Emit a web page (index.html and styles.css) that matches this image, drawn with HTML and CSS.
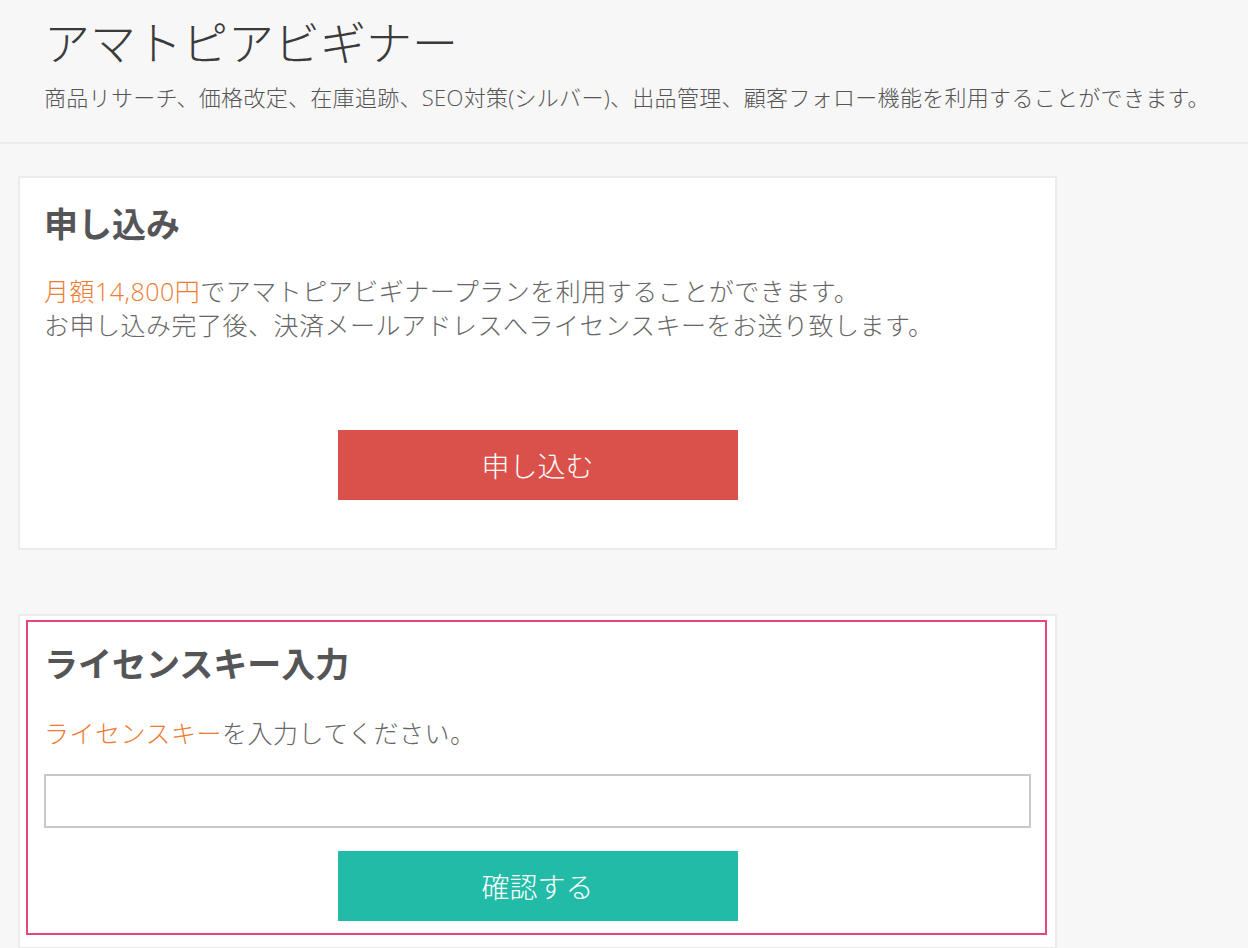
FILE: index.html
```html
<!DOCTYPE html>
<html lang="ja">
<head>
<meta charset="utf-8">
<title>アマトピアビギナー</title>
<link rel="stylesheet" href="styles.css">
</head>
<body>
<header class="page-header">
  <h1 class="page-title">アマトピアビギナー</h1>
  <p class="page-sub">商品リサーチ、価格改定、在庫追跡、SEO対策(シルバー)、出品管理、顧客フォロー機能を利用することができます。</p>
</header>
<main class="main">
  <section class="card card-apply">
    <h2 class="card-title">申し込み</h2>
    <p class="card-text"><span class="accent">月額14,800円</span>でアマトピアビギナープランを利用することができます。<br>お申し込み完了後、決済メールアドレスへライセンスキーをお送り致します。</p>
    <div class="btn-row"><button class="btn btn-red" type="button">申し込む</button></div>
  </section>
  <section class="card card-license">
    <div class="highlight">
      <h2 class="card-title">ライセンスキー入力</h2>
      <p class="card-text card-text-license"><span class="accent">ライセンスキー</span>を入力してください。</p>
      <input class="key-input" type="text">
      <div class="btn-row btn-row-license"><button class="btn btn-teal" type="button">確認する</button></div>
    </div>
  </section>
</main>
</body>
</html>
```

FILE: styles.css
```css
* { box-sizing: border-box; }
html, body { margin: 0; padding: 0; }
body {
  background: #f7f7f7;
  font-family: "Open Sans", "Noto Sans CJK JP Light", "Noto Sans CJK JP DemiLight", "Noto Sans CJK JP", sans-serif;
  color: #666;
}
.page-header {
  padding: 14px 44px 30px;
  border-bottom: 2px solid #ebebeb;
}
.page-title {
  margin: 0;
  font-size: 46px;
  line-height: 56px;
  font-weight: 300;
  color: #3a3a3a;
}
.page-sub {
  margin: 12px 0 0;
  font-size: 22px;
  line-height: 30px;
  font-weight: 300;
  color: #555;
  letter-spacing: 0.3px;
  white-space: nowrap;
}
.main {
  padding: 32px 0 0 18px;
}
.card {
  width: 1039px;
  background: #fff;
  border: 2px solid #ececec;
}
.card-apply {
  padding: 24px 24px 48px 24px;
}
.card-license {
  margin-top: 64px;
  padding: 4px 8px 12px 6px;
}
.highlight {
  border: 2px solid #e5467c;
  padding: 20px 14px 12px 16px;
}
.card-title {
  margin: 0;
  font-family: "Open Sans", "Noto Sans CJK JP", sans-serif;
  font-size: 34px;
  line-height: 44px;
  font-weight: 700;
  color: #555558;
}
.card-text {
  margin: 28px 0 0;
  font-size: 25px;
  line-height: 34px;
  color: #666;
  font-weight: 300;
  letter-spacing: 0.5px;
}
.card-text-license { margin-top: 30px; }
.accent { color: #ee7b30; }
.btn-row {
  display: flex;
  justify-content: center;
  margin-top: 88px;
}
.btn-row-license { margin-top: 23px; }
.btn {
  width: 400px;
  height: 70px;
  border: 0;
  border-radius: 0;
  color: #fff;
  font-family: "Open Sans", "Noto Sans CJK JP Light", "Noto Sans CJK JP DemiLight", "Noto Sans CJK JP", sans-serif;
  font-size: 28px;
  font-weight: 300;
  display: flex;
  align-items: center;
  justify-content: center;
  padding: 0;
}
.btn-red { background: #da514b; }
.btn-teal { background: #21bba7; }
.key-input {
  display: block;
  margin-top: 24px;
  width: 987px;
  height: 54px;
  border: 2px solid #c8c8c8;
  background: #fff;
  padding: 0 12px;
  font-size: 22px;
}
```
